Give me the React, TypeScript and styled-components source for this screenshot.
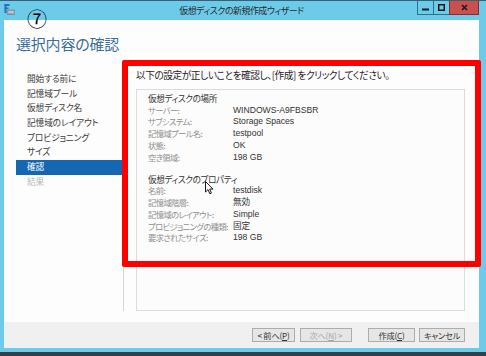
import React from "react";
import styled, { createGlobalStyle } from "styled-components";

const Global = createGlobalStyle`
  html, body { margin: 0; padding: 0; background: #33404a; }
  body {
    width: 486px;
    height: 356px;
    overflow: hidden;
    font-family: "Noto Sans CJK JP", "Liberation Sans", sans-serif;
    font-feature-settings: "palt";
  }
`;

const Window = styled.div`
  position: relative;
  width: 486px;
  height: 352px;
  box-sizing: border-box;
  background: #6dcbea;
  border-top: 1px solid #3e5f70;
  padding: 0 7px 4px 4px;
  display: flex;
  flex-direction: column;
`;

const TitleBar = styled.div`
  height: 19px;
  flex: none;
  display: grid;
  grid-template-columns: 1fr auto 1fr;
  align-items: start;
`;

const TitleIcon = styled.svg`
  margin-top: 3px;
  width: 11px;
  height: 11px;
`;

const TitleText = styled.div`
  font-size: 9px;
  line-height: 19px;
  letter-spacing: -0.55px;
  color: #2a2a2a;
`;

const Controls = styled.div`
  justify-self: end;
  display: flex;
  height: 14px;
`;

const Ctrl = styled.div<{ $w: number; $close?: boolean }>`
  width: ${(p) => p.$w}px;
  height: 14px;
  box-sizing: border-box;
  border: 1px solid ${(p) => (p.$close ? "#8a2b2b" : "#2f6f8c")};
  border-top: none;
  margin-left: -1px;
  background: ${(p) => (p.$close ? "#c9504e" : "#6dcbea")};
  display: flex;
  align-items: center;
  justify-content: center;
`;

const Client = styled.div`
  flex: 1;
  background: #fdfdfd;
  display: flex;
  flex-direction: column;
`;

const Header = styled.div`
  height: 40px;
  flex: none;
  padding-left: 12px;
  display: flex;
  align-items: center;
`;

const Heading = styled.h1`
  margin: 0;
  font-weight: normal;
  font-size: 15px;
  color: #3c6f9b;
  line-height: 18px;
  margin-top: 8px;
  letter-spacing: -0.2px;
`;

const Body = styled.div`
  flex: 1;
  display: flex;
  padding-bottom: 11px;
`;

const Nav = styled.ul`
  list-style: none;
  margin: 0;
  padding: 12px 0 0 12px;
  width: 107px;
  border-right: 1px solid #d6d6d6;
`;

const NavItem = styled.li<{ $active?: boolean; $disabled?: boolean }>`
  height: 14.7px;
  line-height: 14.7px;
  padding-left: 11px;
  font-size: 8.7px;
  letter-spacing: -0.1px;
  white-space: nowrap;
  color: ${(p) => (p.$active ? "#ffffff" : p.$disabled ? "#b8b8b8" : "#3a3a3a")};
  background: ${(p) => (p.$active ? "#1467b0" : "transparent")};
`;

const Main = styled.div`
  flex: 1;
  padding: 8px 14px 0 12px;
  display: flex;
  flex-direction: column;
`;

const Instruction = styled.div`
  font-size: 9.7px;
  letter-spacing: -0.45px;
  line-height: 14px;
  color: #1e1e1e;
  height: 21px;
  white-space: nowrap;
`;

const Summary = styled.div`
  flex: 1;
  border: 1px solid #dcdcdc;
  background: #fcfcfc;
  padding: 3px 0 0 11px;
`;

const Section = styled.div`
  margin-bottom: 10.5px;
`;

const SectionTitle = styled.div`
  font-size: 8.6px;
  letter-spacing: -0.35px;
  line-height: 11.7px;
  color: #333;
  white-space: nowrap;
`;

const Row = styled.div`
  display: grid;
  grid-template-columns: 85px 1fr;
  line-height: 11.7px;
`;

const Label = styled.span`
  color: #8f8f8f;
  font-size: 8.3px;
  letter-spacing: -0.6px;
  white-space: nowrap;
`;

const Value = styled.span`
  color: #333;
  font-family: "Liberation Sans", "Noto Sans CJK JP", sans-serif;
  font-size: 8.6px;
`;

const Footer = styled.div`
  height: 26px;
  flex: none;
  background: #f0f0f0;
  display: flex;
  align-items: center;
  justify-content: flex-end;
  padding-right: 14px;
`;

const Button = styled.div<{ $w: number; $gap: number; $disabled?: boolean }>`
  width: ${(p) => p.$w}px;
  height: 14px;
  box-sizing: border-box;
  margin-left: ${(p) => p.$gap}px;
  border: 1px solid #acacac;
  background: #e6e6e6;
  font-size: 8.2px;
  letter-spacing: -0.2px;
  color: ${(p) => (p.$disabled ? "#a8a8a8" : "#333")};
  display: flex;
  align-items: center;
  justify-content: center;
  white-space: nowrap;
  font-family: "Noto Sans CJK JP", "Liberation Sans", sans-serif;
`;

const U = styled.span`
  text-decoration: underline;
`;

const RedBox = styled.div`
  position: absolute;
  left: 122px;
  top: 59px;
  width: 359px;
  height: 207px;
  box-sizing: border-box;
  border: 6px solid #ff0000;
  border-radius: 2px;
  pointer-events: none;
`;

const Marker = styled.div`
  position: absolute;
  left: 27px;
  top: 8px;
  font-size: 20px;
  line-height: 20px;
  color: #000;
  font-family: "Noto Sans CJK JP", "DejaVu Sans", sans-serif;
`;

const Cursor = styled.svg`
  position: absolute;
  left: 205px;
  top: 180px;
  width: 9px;
  height: 14px;
`;

const location: [string, string][] = [
  ["サーバー:", "WINDOWS-A9FBSBR"],
  ["サブシステム:", "Storage Spaces"],
  ["記憶域プール名:", "testpool"],
  ["状態:", "OK"],
  ["空き領域:", "198 GB"],
];

const props: [string, string][] = [
  ["名前:", "testdisk"],
  ["記憶域階層:", "無効"],
  ["記憶域のレイアウト:", "Simple"],
  ["プロビジョニングの種類:", "固定"],
  ["要求されたサイズ:", "198 GB"],
];

const navItems = [
  "開始する前に",
  "記憶域プール",
  "仮想ディスク名",
  "記憶域のレイアウト",
  "プロビジョニング",
  "サイズ",
  "確認",
  "結果",
];

export default function App() {
  return (
    <>
      <Global />
      <Window>
        <TitleBar>
          <TitleIcon viewBox="0 0 11 11">
            <rect x="0.5" y="0" width="2" height="9" fill="#2a6fb8" />
            <rect x="0.5" y="0" width="5" height="2" fill="#2a6fb8" />
            <rect x="0.5" y="3.5" width="4" height="1.5" fill="#2a6fb8" />
            <rect x="3" y="6" width="8" height="4.5" rx="0.5" fill="#9aa6ad" stroke="#6d7a82" strokeWidth="0.6" />
            <rect x="4.5" y="7.5" width="5" height="1" fill="#e6ecef" />
          </TitleIcon>
          <TitleText>仮想ディスクの新規作成ウィザード</TitleText>
          <Controls>
            <Ctrl $w={17}>
              <svg width="7" height="7" viewBox="0 0 7 7">
                <rect x="0" y="4.5" width="7" height="2" fill="#1a1a1a" />
              </svg>
            </Ctrl>
            <Ctrl $w={17}>
              <svg width="7" height="7" viewBox="0 0 7 7">
                <rect x="0.75" y="0.75" width="5.5" height="5.5" fill="none" stroke="#1a1a1a" strokeWidth="1.5" />
              </svg>
            </Ctrl>
            <Ctrl $w={30} $close>
              <svg width="7" height="7" viewBox="0 0 7 7">
                <path d="M1 1 L6 6 M6 1 L1 6" stroke="#1a1a1a" strokeWidth="1.6" />
              </svg>
            </Ctrl>
          </Controls>
        </TitleBar>
        <Client>
          <Header>
            <Heading>選択内容の確認</Heading>
          </Header>
          <Body>
            <Nav>
              {navItems.map((n, i) => (
                <NavItem key={n} $active={i === 6} $disabled={i === 7}>
                  {n}
                </NavItem>
              ))}
            </Nav>
            <Main>
              <Instruction>以下の設定が正しいことを確認し、[作成] をクリックしてください。</Instruction>
              <Summary>
                <Section>
                  <SectionTitle>仮想ディスクの場所</SectionTitle>
                  {location.map(([l, v]) => (
                    <Row key={l}>
                      <Label>{l}</Label>
                      <Value>{v}</Value>
                    </Row>
                  ))}
                </Section>
                <Section>
                  <SectionTitle>仮想ディスクのプロパティ</SectionTitle>
                  {props.map(([l, v]) => (
                    <Row key={l}>
                      <Label>{l}</Label>
                      <Value>{v}</Value>
                    </Row>
                  ))}
                </Section>
              </Summary>
            </Main>
          </Body>
          <Footer>
            <Button $w={43} $gap={0}>
              &lt; 前へ(<U>P</U>)
            </Button>
            <Button $w={52} $gap={5} $disabled>
              次へ(<U>N</U>) &gt;
            </Button>
            <Button $w={47} $gap={16}>
              作成(<U>C</U>)
            </Button>
            <Button $w={46} $gap={4}>
              キャンセル
            </Button>
          </Footer>
        </Client>
        <RedBox />
        <Marker>⑦</Marker>
        <Cursor viewBox="0 0 9 14">
          <path d="M0.5 0.5 L0.5 11 L3 8.6 L4.8 12.8 L6.4 12.1 L4.7 8.1 L8 8.1 Z" fill="#fff" stroke="#000" strokeWidth="0.9" strokeLinejoin="round" />
        </Cursor>
      </Window>
    </>
  );
}
